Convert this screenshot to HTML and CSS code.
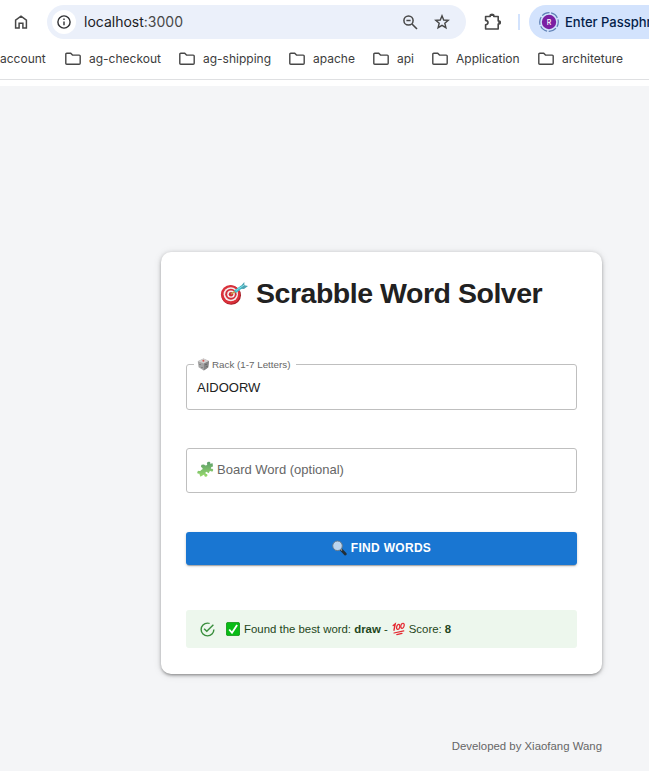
FILE: index.html
```html
<!DOCTYPE html>
<html lang="en">
<head>
<meta charset="utf-8">
<title>Scrabble Word Solver</title>
<link rel="stylesheet" href="styles.css">
</head>
<body>
<svg width="0" height="0" class="defs">
  <symbol id="folder" viewBox="0 0 16 14"><path d="M.8 2.2Q.8 1.2 1.8 1.2H5.7L7.5 3.1H14.2Q15.2 3.1 15.2 4.1V11.3Q15.2 12.3 14.2 12.3H1.8Q.8 12.3.8 11.3Z" fill="none" stroke="#474747" stroke-width="1.4"/></symbol>
</svg>
<header class="browser">
  <div class="toolbar">
    <svg class="home" viewBox="0 0 14 14"><path d="M1.6 13V5.2L7 1.2L12.4 5.2V13H8.9V8.3H5.1V13Z" fill="none" stroke="#474747" stroke-width="1.5"/></svg>
    <div class="omnibox">
      <span class="info"><svg width="14" height="14" viewBox="0 0 14 14"><circle cx="7" cy="7" r="6.1" fill="none" stroke="#303134" stroke-width="1.4"/><path d="M7 6.4V10.2M7 3.6V5" stroke="#303134" stroke-width="1.4"/></svg></span>
      <span class="url"><span class="host">localhost</span>:3000</span>
      <svg class="lens" viewBox="0 0 15 15"><circle cx="5.5" cy="5.5" r="4.6" fill="none" stroke="#474747" stroke-width="1.5"/><path d="M3.4 5.5H7.6M9 9L14 14" stroke="#474747" stroke-width="1.6"/></svg>
      <svg class="star" viewBox="0 0 16 16"><path d="M8 1.8L9.7 6L14.2 6.3L10.8 9.2L11.9 13.7L8 11.3L4.1 13.7L5.2 9.2L1.8 6.3L6.3 6Z" fill="none" stroke="#474747" stroke-width="1.4"/></svg>
    </div>
    <svg class="extension" viewBox="0 0 18 18"><path d="M1.6 3.5H6.2V2.2Q6.2 1.5 7 1.5H9Q9.8 1.5 9.8 2.2V3.5H14.2V8H15.2Q16.2 8 16.2 9V10Q16.2 11 15.2 11H14.2V16H1.6V11.8Q4 11.5 4 9.6T1.6 7.4Z" fill="none" stroke="#474747" stroke-width="1.6" stroke-linejoin="round"/><path d="M6.2 3V1.7Q8 0 9.8 1.7V3ZM14.3 8Q17.8 8 16.8 10.3L14.3 11Z" fill="#474747"/></svg>
    <span class="divider"></span>
    <div class="profile">
      <svg width="20" height="20" viewBox="0 0 20 20"><circle cx="10" cy="10" r="9.3" fill="none" stroke="#5f80b5" stroke-width="1.2" stroke-dasharray="8.1 1.64" stroke-dashoffset="3"/><circle cx="10" cy="10" r="7.2" fill="#7b1fa2"/><text x="10" y="12.7" text-anchor="middle" class="initial">R</text></svg>
      <span>Enter Passphrase</span>
    </div>
  </div>
  <nav class="bookmarks">
    <span class="mark w-account">account</span>
    <span class="mark w-checkout"><svg><use href="#folder"/></svg>ag-checkout</span>
    <span class="mark w-shipping"><svg><use href="#folder"/></svg>ag-shipping</span>
    <span class="mark w-apache"><svg><use href="#folder"/></svg>apache</span>
    <span class="mark w-api"><svg><use href="#folder"/></svg>api</span>
    <span class="mark w-application"><svg><use href="#folder"/></svg>Application</span>
    <span class="mark"><svg><use href="#folder"/></svg>architeture</span>
  </nav>
</header>
<main>
  <section class="card">
    <h1>
      <svg width="28" height="26" viewBox="0 0 28 26"><ellipse cx="11.2" cy="14.2" rx="9.8" ry="9.6" fill="#a51c25"/><ellipse cx="10.5" cy="13.5" rx="9.6" ry="9.4" fill="#d9303a"/><ellipse cx="10.8" cy="13.2" rx="7.2" ry="7" fill="#f5eeee"/><ellipse cx="10.9" cy="13.2" rx="5.7" ry="5.5" fill="#d32f3a"/><ellipse cx="11" cy="13.2" rx="3.8" ry="3.6" fill="#f5eeee"/><circle cx="11" cy="13.2" r="2.2" fill="#cf2934"/><path d="M11 13.2L16 9.8" stroke="#c39a43" stroke-width="1.4"/><path d="M15 10.8L22 5.6" stroke="#3dbecb" stroke-width="3"/><path d="M20.5 5.5L24.3 1L24.4 4.3L28 5L24 8L21 7.8Z" fill="#4da5b4"/><path d="M16 9.4L24 4.2" stroke="#83e1e6" stroke-width="1"/></svg>
      <span>Scrabble Word Solver</span>
    </h1>
    <fieldset class="field rack">
      <legend><svg width="13" height="13" viewBox="0 0 13 13"><path d="M6.5 .6L12 3L11.2 9.4L6.8 12.5L1.6 9.2L.8 3.2Z" fill="#a6a6a6"/><path d="M6.5 .6L12 3L7 5.4L.8 3.2Z" fill="#d2d0d0"/><path d="M7 5.4L12 3L11.2 9.4L6.8 12.5Z" fill="#858585"/><circle cx="6.4" cy="2.8" r="1" fill="#d8564f"/><path d="M3 6.2V7M5 9V9.8M9 6V7M10 8V8.8" stroke="#555" stroke-width="1"/></svg><span>Rack (1-7 Letters)</span></legend>
      <div class="value">AIDOORW</div>
    </fieldset>
    <div class="field board">
      <svg width="17" height="17" viewBox="0 0 17 17"><defs><linearGradient id="leaf" x2="0" y2="1"><stop stop-color="#5c9d6b"/><stop offset="1" stop-color="#98db6b"/></linearGradient></defs><path d="M4.6 3.8L7 3.4Q8.6 5.2 10 4Q10.6 3 9.8 2.2Q10.6 .4 12.5 .8Q13.8 1.4 13.2 2.8L15.6 2.3L16 5.6Q13.9 5.6 13.8 7.2Q14.2 8.2 15.4 7.7Q16.9 8.6 15.8 10.2Q14.4 11 13 9.7L11.7 12.2L9.4 10.8Q7.8 11.3 8.7 12.7Q10.7 12.6 10.5 14.4Q9.6 16.2 7.8 15.4Q7 14.6 7.2 13.6L3.4 15.8L2.2 12.6Q.4 13.2.2 11.4Q.5 9.6 2.2 9.9Q3.6 10.4 4.2 9L5.8 8L5 6.6Q3.2 6.2 4.6 3.8Z" fill="url(#leaf)"/></svg>
      <span>Board Word (optional)</span>
    </div>
    <button class="find">
      <svg width="15" height="16" viewBox="0 0 15 16"><path d="M9 9.5L13.3 14" stroke="#222e36" stroke-width="2.7" stroke-linecap="round"/><path d="M8.2 8.5L10 10.5" stroke="#889097" stroke-width="1.5"/><circle cx="5.5" cy="5.8" r="4.8" fill="#bcd5ee" stroke="#697b8b" stroke-width="1"/></svg>
      <span>FIND WORDS</span>
    </button>
    <div class="alert">
      <svg class="ok" width="17" height="17" viewBox="0 0 24 24"><path fill="#388e3c" d="M20,12A8,8 0 0,1 12,20A8,8 0 0,1 4,12A8,8 0 0,1 12,4C12.76,4 13.5,4.11 14.2,4.31L15.77,2.74C14.61,2.26 13.34,2 12,2A10,10 0 0,0 2,12A10,10 0 0,0 12,22A10,10 0 0,0 22,12M7.91,10.08L6.5,11.5L11,16L21,6L19.59,4.58L11,13.17L7.91,10.08Z"/></svg>
      <svg class="check" width="14" height="14" viewBox="0 0 14 14"><rect x=".4" y=".4" width="13.2" height="13.2" rx="1.5" fill="#08bc16" stroke="#078f0d" stroke-width=".8"/><path d="M3.2 7.5L6 10.8L11.1 3" fill="none" stroke="#fff" stroke-width="1.8"/></svg>
      <span class="found">Found the best word: <b>draw</b> -</span>
      <svg class="hundred" width="14" height="14" viewBox="0 0 14 14"><g fill="none" stroke="#e52831" stroke-linecap="round"><path d="M1.2 3.5L3.2 2L2 8.2" stroke-width="1.4"/><ellipse cx="6.2" cy="4.9" rx="1.5" ry="2.6" transform="rotate(15 6.2 4.9)" stroke-width="1.2"/><ellipse cx="10.5" cy="3.8" rx="1.6" ry="2.6" transform="rotate(15 10.5 3.8)" stroke-width="1.2"/><path d="M2 11L11.8 8.8M4.8 12.7L10 11.3" stroke-width="1.2"/></g></svg>
      <span class="score">Score: <b>8</b></span>
    </div>
  </section>
  <footer>Developed by Xiaofang Wang</footer>
</main>
</body>
</html>
```
FILE: styles.css
```css
* { box-sizing: border-box; }
body { margin: 0; height: 771px; overflow: hidden; background: #f4f5f7; font-family: "Liberation Sans", Arial, sans-serif; }
svg { display: block; flex: none; }
.defs { position: absolute; }
.browser { height: 86px; background: #fff; overflow: hidden; font-family: Inter, sans-serif; color: #3c3c3c; }
.toolbar { display: flex; align-items: center; padding-top: 5px; height: 39px; }
.home { width: 14px; height: 14px; margin: 0 19px 0 14px; }
.omnibox { width: 419px; height: 34px; flex: none; display: flex; align-items: center; border-radius: 17px; background: #ebf0fa; padding-left: 5px; }
.info { width: 24px; height: 24px; border-radius: 50%; background: #fff; display: grid; place-items: center; }
.url { width: 327px; padding-left: 8px; font-size: 14px; line-height: 18px; margin-top: -1px; letter-spacing: 0; color: #474747; }
.host { color: #202124; }
.lens { width: 15px; height: 15px; margin-right: 16px; }
.star { width: 16px; height: 16px; }
.extension { width: 18px; height: 18px; margin-left: 18px; }
.divider { width: 2px; height: 16px; margin: 0 9px 0 16px; background: #d3e3fd; flex: none; }
.profile { width: 170px; height: 34px; flex: none; display: flex; align-items: center; gap: 6px; padding-left: 10px; border-radius: 17px 0 0 17px; background: #d3e3fd; color: #041e49; font-size: 13px; font-weight: 500; white-space: nowrap; }
.initial { font: 500 7px Inter, sans-serif; fill: #fff; }
.bookmarks { height: 41px; padding-bottom: 1px; border-bottom: 1px solid #dfe0e2; display: flex; align-items: center; font-size: 12px; white-space: nowrap; }
.mark { display: flex; align-items: center; gap: 8px; flex: none; line-height: 14px; }
.mark svg { width: 16px; height: 14px; }
.w-account { width: 65px; }
.w-checkout { width: 114px; }
.w-shipping { width: 110px; }
.w-apache { width: 84px; }
.w-api { width: 59px; }
.w-application { width: 106px; }
main { padding: 166px 47px 0 161px; }
.card { width: 441px; height: 422px; padding: 24px 25px; border-radius: 10px; background: #fff; box-shadow: 0 2px 3px -1px rgba(0,0,0,.3), 0 1px 4px rgba(0,0,0,.2), 0 1px 8px rgba(0,0,0,.1); }
h1 { height: 34px; margin: 0 0 48px; display: flex; align-items: center; gap: 8px; padding-left: 34px; color: #212121; font-size: 28.5px; letter-spacing: -0.47px; line-height: 34px; white-space: nowrap; }
h1 svg { margin-top: 2px; }
.field { width: 391px; margin: 0; border: 1px solid #bfbfbf; border-radius: 3px; }
.rack { height: 52px; padding: 0 10px; }
.rack legend { height: 13px; margin-left: -3px; padding: 0 6px 0 3px; display: flex; align-items: center; gap: 2px; width: 102px; color: #666; font-size: 9.8px; white-space: nowrap; }
.value { font-size: 13px; line-height: 18px; margin-top: 8px; color: #212121; }
.board { height: 45px; margin-top: 38px; padding: 0 10px 2px; display: flex; align-items: center; gap: 3px; color: #666; font-size: 13px; }
.find { width: 391px; height: 33px; margin-top: 39px; padding: 0 0 2px; border: 0; border-radius: 3px; background: #1976d2; color: #fff; display: flex; align-items: center; justify-content: center; gap: 4px; font: bold 12px "Liberation Sans", Arial, sans-serif; letter-spacing: 0.3px; box-shadow: 0 2px 1px -1px rgba(0,0,0,.25), 0 1px 3px rgba(0,0,0,.2); }
.alert { width: 391px; height: 38px; margin-top: 45px; padding-left: 13px; border-radius: 3px; background: #edf7ed; color: #1e4620; display: flex; align-items: center; font-size: 11.4px; white-space: nowrap; }
.check { margin: 0 4px 0 10px; }
.hundred { margin: 0 3px 0 4px; }
footer { margin-top: 65px; width: 441px; text-align: right; font-size: 11.4px; line-height: 14px; color: #666; }
```
